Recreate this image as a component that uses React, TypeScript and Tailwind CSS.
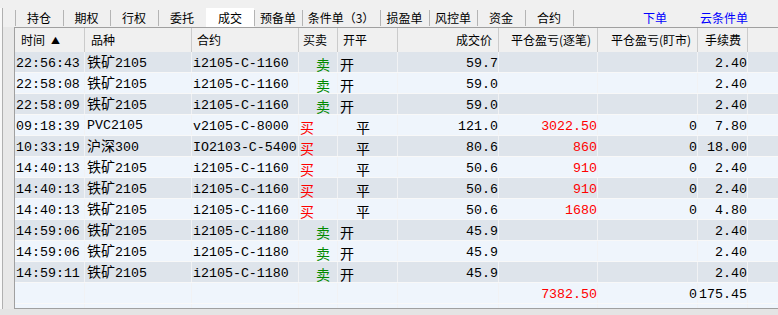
import React from "react"

const tabs = [
  { label: "持仓", w: "w-[48px]" },
  { label: "期权", w: "w-[47px]" },
  { label: "行权", w: "w-[48px]" },
  { label: "委托", w: "w-[48px]" },
  { label: "成交", w: "w-[48px]", active: true },
  { label: "预备单", w: "w-[48px]" },
  { label: "条件单（3）", w: "w-[78px]" },
  { label: "损盈单", w: "w-[49px]" },
  { label: "风控单", w: "w-[48px]" },
  { label: "资金", w: "w-[48px]" },
  { label: "合约", w: "w-[48px]" },
]

const cols = "grid grid-cols-[70px_107px_107px_39px_60px_101px_99px_100px_50px_1fr]"

type Row = {
  time: string
  name: string
  code: string
  side: "买" | "卖" | ""
  oc: "开" | "平" | ""
  price: string
  pnl: string
  mark: string
  fee: string
}

const sell = (time: string, code: string, price: string): Row => ({
  time, name: "铁矿2105", code, side: "卖", oc: "开", price, pnl: "", mark: "", fee: "2.40",
})

const rows: Row[] = [
  sell("22:56:43", "i2105-C-1160", "59.7"),
  sell("22:58:08", "i2105-C-1160", "59.0"),
  sell("22:58:09", "i2105-C-1160", "59.0"),
  { time: "09:18:39", name: "PVC2105", code: "v2105-C-8000", side: "买", oc: "平", price: "121.0", pnl: "3022.50", mark: "0", fee: "7.80" },
  { time: "10:33:19", name: "沪深300", code: "IO2103-C-5400", side: "买", oc: "平", price: "80.6", pnl: "860", mark: "0", fee: "18.00" },
  { time: "14:40:13", name: "铁矿2105", code: "i2105-C-1160", side: "买", oc: "平", price: "50.6", pnl: "910", mark: "0", fee: "2.40" },
  { time: "14:40:13", name: "铁矿2105", code: "i2105-C-1160", side: "买", oc: "平", price: "50.6", pnl: "910", mark: "0", fee: "2.40" },
  { time: "14:40:13", name: "铁矿2105", code: "i2105-C-1160", side: "买", oc: "平", price: "50.6", pnl: "1680", mark: "0", fee: "4.80" },
  sell("14:59:06", "i2105-C-1180", "45.9"),
  sell("14:59:06", "i2105-C-1180", "45.9"),
  sell("14:59:11", "i2105-C-1180", "45.9"),
]

// CJK glyphs sit a bit wider than the mono digits, so they get their own size
function Txt({ s }: { s: string }) {
  const parts = s.split(/([\u4e00-\u9fff]+)/)
  return (
    <span>
      {parts.map((p, i) =>
        /[\u4e00-\u9fff]/.test(p) ? (
          <span key={i} className="font-['Noto_Sans_CJK_SC',sans-serif] text-[14px]">
            {p}
          </span>
        ) : (
          <span key={i}>{p}</span>
        )
      )}
    </span>
  )
}

const base = "h-[20px] flex items-center border-r border-[#f1f2f4] whitespace-nowrap overflow-hidden"
const cell = `${base} pt-[3px]`
const num = `${cell} justify-end`

function DataRow({ r, odd }: { r: Row; odd: boolean }) {
  return (
    <div className={`${cols} border-b border-[#f8f8f8] ${odd ? "bg-[#dee4eb]" : "bg-[#eff5fc]"}`}>
      <div className={`${cell} pl-[1px]`}>{r.time}</div>
      <div className={`${base} pt-[1px] pl-[2px]`}><Txt s={r.name} /></div>
      <div className={`${cell} pl-[1px]`}>{r.code}</div>
      <div className={`${cell} font-['Noto_Sans_CJK_SC',sans-serif] text-[14px] ${r.side === "买" ? "pl-[1px] text-[#ff0000]" : "pl-[17px] text-[#008a00]"}`}>
        {r.side}
      </div>
      <div className={`${cell} font-['Noto_Sans_CJK_SC',sans-serif] text-[14px] ${r.oc === "开" ? "pl-[2px]" : "pl-[18px]"}`}>
        {r.oc}
      </div>
      <div className={num}>{r.price}</div>
      <div className={`${num} text-[#ff0000]`}>{r.pnl}</div>
      <div className={num}>{r.mark}</div>
      <div className={num}>{r.fee}</div>
      <div className="h-[20px]" />
    </div>
  )
}

export default function App() {
  return (
    <div className="w-[778px] h-[315px] overflow-hidden bg-[#f0f0f0] flex flex-col text-black">
      {/* tab strip */}
      <div className="h-[27px] flex items-end font-['Noto_Sans_CJK_SC',sans-serif] text-[12px]">
        <div className="w-[3px] h-[19px] bg-[#f8f8f8] border-r border-[#b0b0b0]" />
        <div className="w-[12px]" />
        {tabs.map((t) => (
          <div
            key={t.label}
            className={`${t.w} h-[19px] relative flex items-center justify-center ${t.active ? "bg-white" : ""}`}
          >
            {!t.active && <div className="absolute left-0 top-[2px] h-[16px] w-px bg-[#b4b4b4]" />}
            <span className="leading-none">{t.label}</span>
          </div>
        ))}
        <div className="h-[19px] relative flex-1 flex items-center">
          <div className="absolute left-0 top-[2px] h-[16px] w-px bg-[#b4b4b4]" />
          <span className="ml-[70px] text-[#0000ff] leading-none">下单</span>
          <span className="ml-[33px] text-[#0000ff] leading-none">云条件单</span>
        </div>
      </div>

      <div className="flex flex-1 min-h-0">
        {/* left edge of the neighbouring pane */}
        <div className="w-[3px] bg-[#f8f8f8] border-r border-[#b0b0b0]" />
        <div className="w-[11px] bg-[#e8e8e8]" />

        <div className="flex-1 border-t border-l border-b border-[#a0a0a0] flex flex-col bg-[#eff5fc] font-['Liberation_Mono','Noto_Sans_CJK_SC',monospace] text-[13.3px] leading-none">
          {/* header */}
          <div className={`${cols} h-[24px] bg-[#f0f0f0] font-['Noto_Sans_CJK_SC',sans-serif] text-[12px]`}>
            <div className="flex items-center pl-[6px] border-r border-[#cbcbcb]">
              时间<span className="ml-[6px] text-[9px]">▲</span>
            </div>
            <div className="flex items-center pl-[6px] border-r border-[#cbcbcb]">品种</div>
            <div className="flex items-center pl-[5px] border-r border-[#cbcbcb]">合约</div>
            <div className="flex items-center pl-[4px] border-r border-[#cbcbcb]">买卖</div>
            <div className="flex items-center pl-[5px] border-r border-[#cbcbcb]">开平</div>
            <div className="flex items-center justify-end pr-[6px] border-r border-[#cbcbcb]">成交价</div>
            <div className="flex items-center justify-end pr-[6px] border-r border-[#cbcbcb]">平仓盈亏(逐笔)</div>
            <div className="flex items-center justify-end pr-[6px] border-r border-[#cbcbcb]">平仓盈亏(盯市)</div>
            <div className="flex items-center justify-end pr-[6px] border-r border-[#cbcbcb]">手续费</div>
            <div />
          </div>

          {rows.map((r, i) => (
            <DataRow key={i} r={r} odd={i % 2 === 0} />
          ))}

          {/* totals */}
          <div className={`${cols} border-b border-[#f8f8f8] bg-[#eff5fc]`}>
            <div className={cell} />
            <div className={cell} />
            <div className={cell} />
            <div className={cell} />
            <div className={cell} />
            <div className={cell} />
            <div className={`${num} text-[#ff0000]`}>7382.50</div>
            <div className={num}>0</div>
            <div className={num}>175.45</div>
            <div className="h-[20px]" />
          </div>
          <div className={`${cols} flex-1`}>
            <div className="border-r border-[#f1f2f4]" />
            <div className="border-r border-[#f1f2f4]" />
            <div className="border-r border-[#f1f2f4]" />
            <div className="border-r border-[#f1f2f4]" />
            <div className="border-r border-[#f1f2f4]" />
            <div className="border-r border-[#f1f2f4]" />
            <div className="border-r border-[#f1f2f4]" />
            <div className="border-r border-[#f1f2f4]" />
            <div className="border-r border-[#f1f2f4]" />
            <div />
          </div>
        </div>
      </div>
      <div className="h-[6px] bg-[#e4e4e4]" />
    </div>
  )
}
